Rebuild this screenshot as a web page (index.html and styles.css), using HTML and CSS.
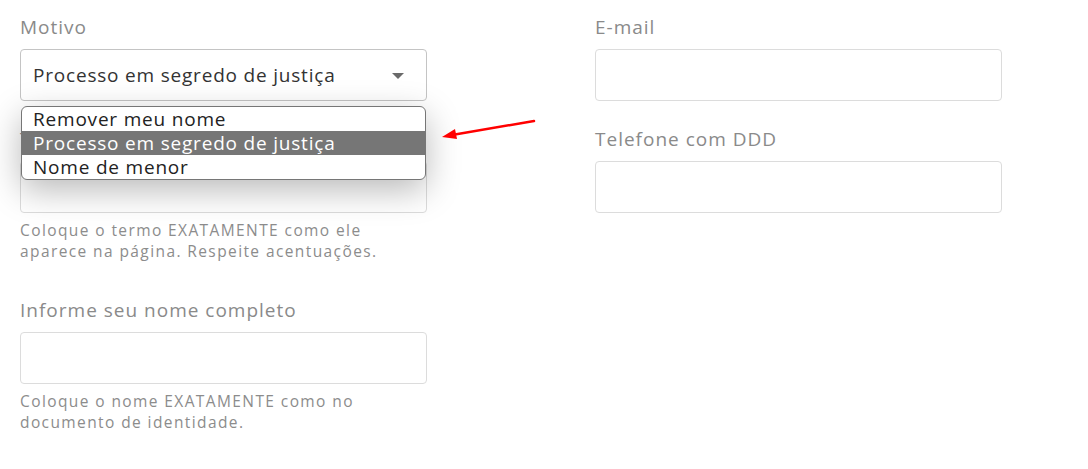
FILE: index.html
```html
<!DOCTYPE html>
<html lang="pt-BR">
<head>
    <meta charset="UTF-8">
    <meta name="viewport" content="width=device-width, initial-scale=1.0">
    <title>Remoção de nome</title>
    <link rel="stylesheet" href="styles.css">
</head>
<body>
    <form class="form">
        <div class="column">
            <div class="field motivo">
                <label for="motivo">Motivo</label>
                <div class="select">
                    <span>Processo em segredo de justiça</span>
                    <span class="caret"></span>
                </div>
                <ul class="options">
                    <li>Remover meu nome</li>
                    <li class="selected">Processo em segredo de justiça</li>
                    <li>Nome de menor</li>
                </ul>
                <svg class="arrow" width="100" height="24" viewBox="0 0 100 24">
                    <line x1="96" y1="4" x2="14" y2="18" stroke="#f00" stroke-width="2.5" stroke-linecap="round"/>
                    <polygon points="4,20 17,12 19,22" fill="#f00"/>
                </svg>
            </div>

            <div class="field">
                <label for="termo">Termo a ser removido</label>
                <input type="text" id="termo">
                <p class="help">Coloque o termo EXATAMENTE como ele aparece na página. Respeite acentuações.</p>
            </div>

            <div class="field">
                <label for="nome">Informe seu nome completo</label>
                <input type="text" id="nome">
                <p class="help">Coloque o nome EXATAMENTE como no documento de identidade.</p>
            </div>
        </div>

        <div class="column">
            <div class="field">
                <label for="email">E-mail</label>
                <input type="email" id="email">
            </div>

            <div class="field">
                <label for="telefone">Telefone com DDD</label>
                <input type="tel" id="telefone">
            </div>
        </div>
    </form>
</body>
</html>
```

FILE: styles.css
```css
body {
    font-family: "Open Sans", Arial, sans-serif;
    background-color: #fff;
    margin: 0;
}

.form {
    display: flex;
    gap: 168px;
    padding: 14px 0 0 20px;
}

.column {
    width: 407px;
    display: flex;
    flex-direction: column;
    gap: 25px;
}

.field {
    display: flex;
    flex-direction: column;
    position: relative;
}

label {
    font-size: 19px;
    line-height: 26px;
    letter-spacing: 1px;
    color: #8a8a8a;
    margin-bottom: 9px;
}

input,
.select {
    box-sizing: border-box;
    height: 52px;
    border: 1px solid #dcdcdc;
    border-radius: 4px;
    background: #fff;
}

.select {
    border-color: #c4c4c4;
    display: flex;
    align-items: center;
    justify-content: space-between;
    padding: 0 22px 0 12px;
    font-size: 19px;
    letter-spacing: 0.8px;
    color: #333;
}

.caret {
    width: 0;
    height: 0;
    margin-top: 2px;
    border-left: 6px solid transparent;
    border-right: 6px solid transparent;
    border-top: 6px solid #6a6a6a;
}

.help {
    margin: 7px 0 10px;
    padding-right: 20px;
    font-size: 15.5px;
    line-height: 21px;
    letter-spacing: 1.4px;
    color: #8c8c8c;
}

.options {
    position: absolute;
    top: 92px;
    left: 1px;
    width: 405px;
    box-sizing: border-box;
    margin: 0;
    padding: 0;
    list-style: none;
    background: #fff;
    border: 1px solid #767676;
    border-radius: 6px;
    box-shadow: 0 10px 34px rgba(0, 0, 0, 0.28);
    overflow: hidden;
    z-index: 2;
}

.options li {
    height: 24px;
    line-height: 24px;
    padding-left: 11px;
    font-size: 19px;
    letter-spacing: 0.8px;
    color: #222;
}

.options .selected {
    background: #767676;
    color: #fff;
}

.arrow {
    position: absolute;
    top: 103px;
    left: 418px;
    z-index: 3;
}
```
